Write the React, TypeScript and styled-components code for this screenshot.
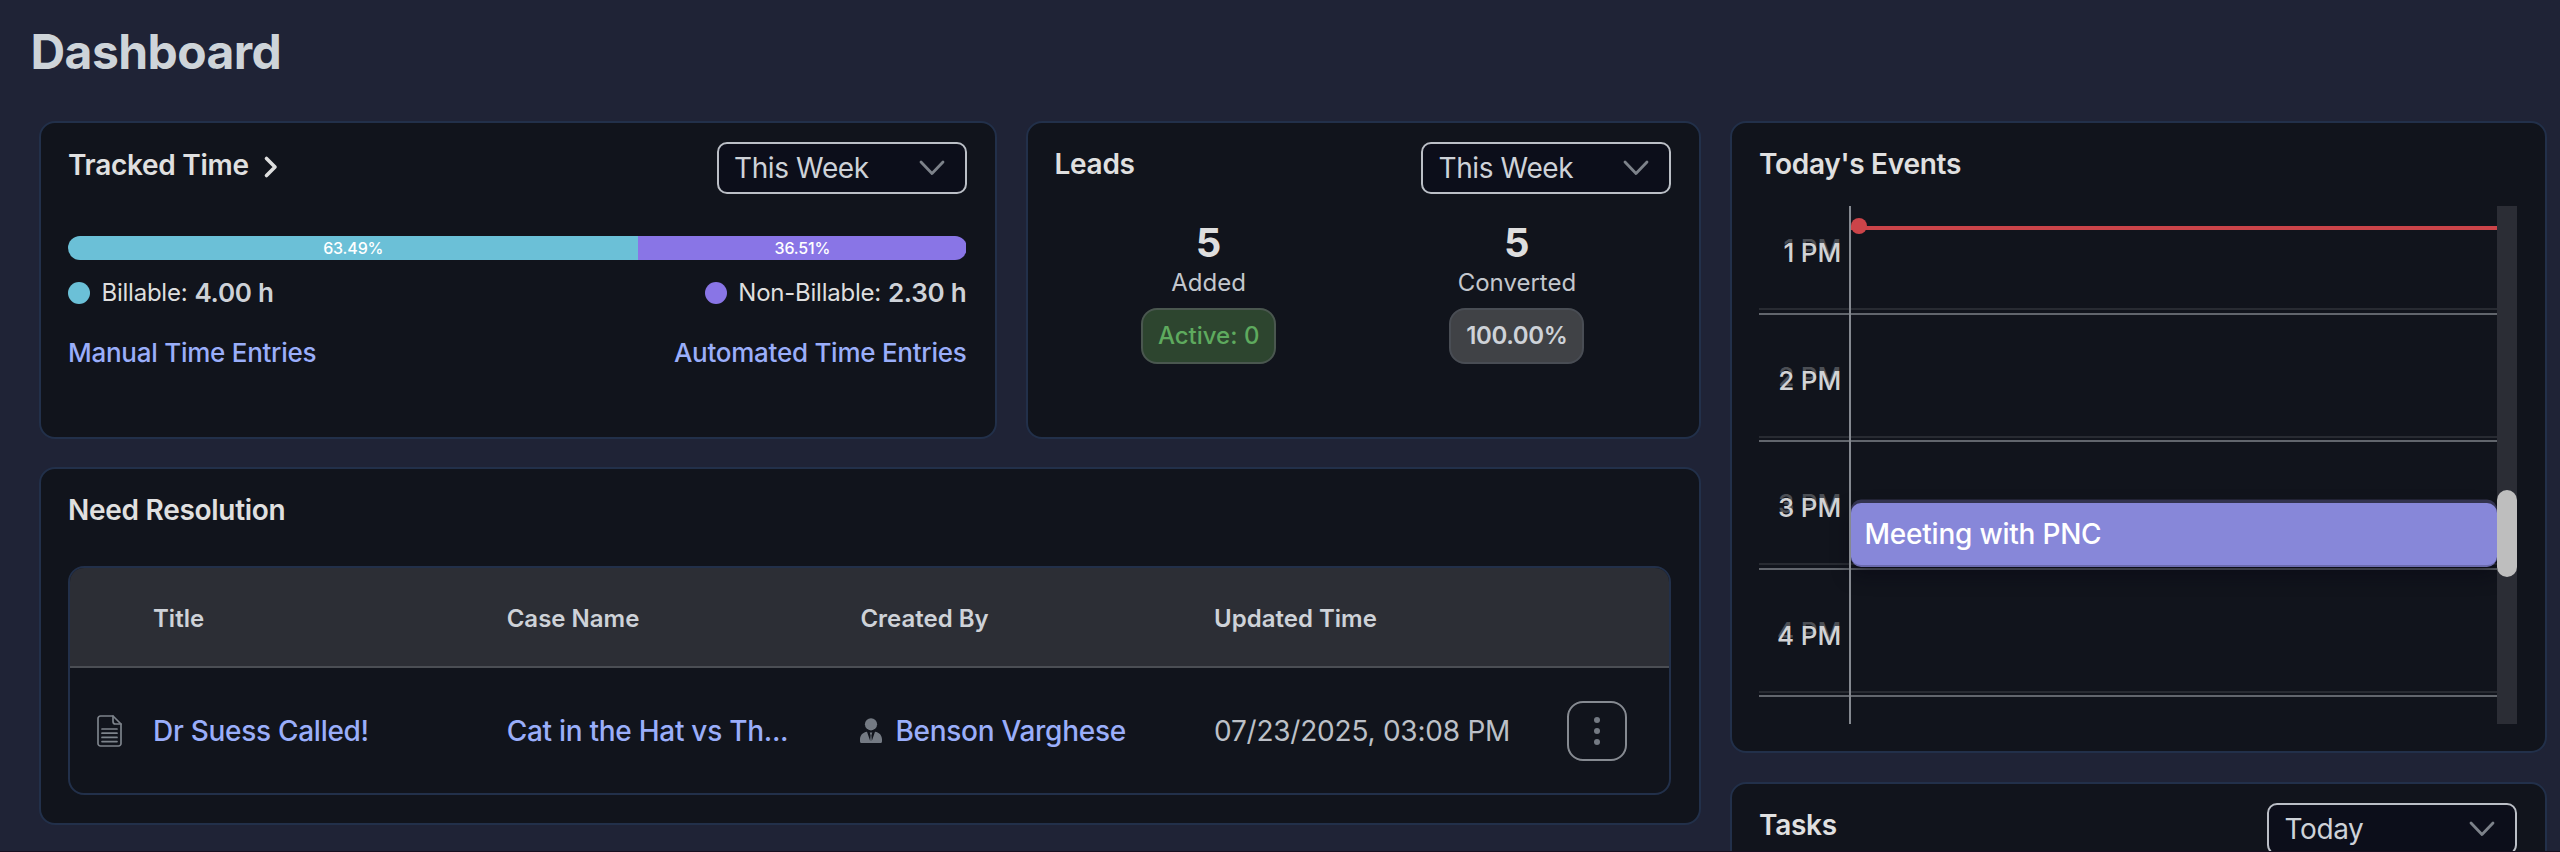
import React from "react";
import styled, { createGlobalStyle } from "styled-components";

const GlobalStyle = createGlobalStyle`
  *, *::before, *::after { box-sizing: border-box; }
  body {
    margin: 0;
    background: #1f2336;
    font-family: Inter, "Liberation Sans", sans-serif;
    color: #dedede;
  }
`;

const Page = styled.div`
  height: 852px;
  overflow: hidden;
  background: #1f2336;
  border-bottom: 1px solid #170f20;
`;

const PageTitle = styled.h1`
  margin: 0;
  padding: 22px 0 0 30.5px;
  height: 121px;
  font-size: 48px;
  font-weight: 700;
  line-height: 60px;
  letter-spacing: -0.012em;
  color: #ced4d9;
`;

const Columns = styled.div`
  display: grid;
  grid-template-columns: 1662px 817px;
  column-gap: 29px;
  padding-left: 39px;
  align-items: start;
`;

const MainColumn = styled.div`
  display: grid;
  grid-template-columns: 957.5px 675.5px;
  grid-template-rows: 318px 358px;
  column-gap: 29px;
  row-gap: 28px;
`;

const SideColumn = styled.div`
  display: grid;
  grid-template-rows: 632px 400px;
  row-gap: 29px;
`;

const Card = styled.section<{ $wide?: boolean }>`
  grid-column: ${({ $wide }) => ($wide ? "1 / -1" : "auto")};
  border: 2px solid #22304a;
  border-radius: 16px;
  background: #11141c;
  padding: 19px 28px 27px 27px;
`;

const CardHeader = styled.header`
  display: flex;
  justify-content: space-between;
  align-items: flex-start;
`;

const CardTitle = styled.h2<{ $line?: number }>`
  margin: 0;
  display: flex;
  align-items: center;
  font-size: 28px;
  font-weight: 600;
  line-height: ${({ $line = 44 }) => $line}px;
  letter-spacing: -0.01em;
  color: #e0e0e0;
`;

const TitleChevron = styled.svg`
  margin: 4px 0 0 14px;
  display: block;
`;

const SelectBox = styled.button`
  display: flex;
  align-items: center;
  justify-content: space-between;
  width: 250px;
  height: 52px;
  padding: 0 20px 0 15.5px;
  border: 2px solid #bbbfc6;
  border-radius: 10px;
  background: #0c0e1a;
  color: #ced2d8;
  font: 400 28px/48px Inter, "Liberation Sans", sans-serif;
  letter-spacing: -0.014em;
`;

const Bar = styled.div`
  display: flex;
  height: 24px;
  margin-top: 42px;
  border-radius: 12px;
  overflow: hidden;
`;

const BarPart = styled.div<{ $color: string }>`
  background: ${({ $color }) => $color};
  color: #fff;
  font-size: 16px;
  font-weight: 500;
  line-height: 25px;
  letter-spacing: -0.01em;
  text-align: center;
`;

const Split = styled.div<{ $top: number }>`
  display: flex;
  justify-content: space-between;
  margin-top: ${({ $top }) => $top}px;
  line-height: 30px;
`;

const Legend = styled.div`
  display: flex;
  align-items: center;
  font-size: 24px;
  letter-spacing: -0.01em;
  color: #dedede;
`;

const Dot = styled.i<{ $color: string }>`
  width: 22px;
  height: 22px;
  margin-right: 11.5px;
  border-radius: 50%;
  background: ${({ $color }) => $color};
`;

const Hours = styled.strong`
  margin-left: 7px;
  font-size: 26px;
  font-weight: 600;
  color: #ced2d8;
`;

const Link = styled.a<{ $size?: number }>`
  font-size: ${({ $size = 28 }) => $size}px;
  font-weight: 500;
  letter-spacing: -0.01em;
  color: #9aaefa;
  white-space: nowrap;
`;

const Stats = styled.div`
  display: grid;
  grid-template-columns: 1fr 1fr;
  margin-top: 25px;
`;

const Stat = styled.div`
  display: flex;
  flex-direction: column;
  align-items: center;
`;

const StatValue = styled.div`
  font-size: 40px;
  font-weight: 700;
  line-height: 48px;
`;

const StatLabel = styled.div`
  font-size: 24px;
  line-height: 32px;
  color: #c3c7cd;
`;

const Badge = styled.div<{ $tone: "green" | "grey" }>`
  width: 135px;
  height: 56px;
  margin-top: 9px;
  border: 2px solid ${({ $tone }) => ($tone === "green" ? "#4a574f" : "#494d54")};
  border-radius: 16px;
  background: ${({ $tone }) => ($tone === "green" ? "#2d452f" : "#404246")};
  color: ${({ $tone }) => ($tone === "green" ? "#5eaa5e" : "#ced2d8")};
  font-size: 24px;
  font-weight: ${({ $tone }) => ($tone === "green" ? 500 : 600)};
  line-height: 51px;
  letter-spacing: ${({ $tone }) => ($tone === "green" ? 0 : "-0.016em")};
  text-align: center;
`;

const Table = styled.div`
  margin-top: 34px;
  border: 2px solid #22304a;
  border-radius: 16px;
  overflow: hidden;
`;

const TableRow = styled.div<{ $head?: boolean }>`
  display: grid;
  grid-template-columns: 83px 353.7px 353.7px 353.7px 353.4px 1fr;
  align-items: center;
  height: ${({ $head }) => ($head ? 100 : 125)}px;
  background: ${({ $head }) => ($head ? "#2c2e35" : "transparent")};
  border-bottom: ${({ $head }) => ($head ? "2px solid #4b4e54" : "0")};
  font-size: ${({ $head }) => ($head ? 24 : 28)}px;
  font-weight: ${({ $head }) => ($head ? 600 : 400)};
  letter-spacing: ${({ $head }) => ($head ? 0 : "-0.008em")};
  padding-top: ${({ $head }) => ($head ? 3 : 0)}px;
  color: ${({ $head }) => ($head ? "#ced2d8" : "#bcc0c7")};
`;

const Cell = styled.div`
  display: flex;
  align-items: center;
  white-space: nowrap;
`;

const IconCell = styled(Cell)`
  padding-left: 27px;
`;

const PersonIcon = styled.svg`
  display: block;
  margin: 0 13px 0 0;
`;

const MoreButton = styled.button`
  display: grid;
  place-items: center;
  width: 60px;
  height: 60px;
  padding: 0;
  border: 2px solid #868a91;
  border-radius: 16px;
  background: transparent;
`;

const Calendar = styled.div`
  display: flex;
  height: 518px;
  margin-top: 20px;
`;

const Schedule = styled.div`
  position: relative;
  width: 738px;
  overflow: hidden;
`;

const HourList = styled.div`
  margin-top: -19px;
`;

const HourRow = styled.div`
  position: relative;
  display: grid;
  grid-template-columns: 92px 1fr;
  height: 127.5px;
  border-bottom: 2px solid #62666d;

  &::after {
    content: "";
    position: absolute;
    left: 0;
    right: 0;
    bottom: 2.5px;
    height: 2px;
    background: #282b32;
  }
`;

const HourLabel = styled.div`
  border-right: 2px solid #858990;
  margin-bottom: -2px;
  padding-right: 8px;
  z-index: 1;
  font-size: 26px;
  font-weight: 500;
  line-height: 132px;
  letter-spacing: -0.005em;
  text-align: right;
  color: #d2d3d5;
  text-shadow: 0 -4px 0 #4c4f55;
`;

const EventBlock = styled.div`
  position: absolute;
  left: 92px;
  right: 0;
  top: 297px;
  height: 64px;
  padding-left: 13.5px;
  border-radius: 10px;
  background: #8787d9;
  box-shadow: 0 -3.5px 0 #33334f, 0 8px 18px rgba(8, 9, 20, 0.6);
  border-bottom: 2px solid #6b6bad;
  color: #fff;
  font-size: 28px;
  font-weight: 500;
  line-height: 63px;
  letter-spacing: -0.008em;
`;

const NowLine = styled.div`
  position: absolute;
  left: 92px;
  right: 0;
  top: 20px;
  height: 4px;
  background: #cc4449;

  &::before {
    content: "";
    position: absolute;
    left: -0.5px;
    top: -8px;
    width: 16px;
    height: 16px;
    border-radius: 50%;
    background: #cc4449;
  }
`;

const ScrollTrack = styled.div`
  width: 20px;
  padding-top: 284px;
  background: #2b2d35;
`;

const ScrollThumb = styled.div`
  height: 87px;
  border-radius: 10px;
  background: #bebebe;
`;

const Select = ({ label }: { label: string }) => (
  <SelectBox>
    {label}
    <svg width="26" height="16" viewBox="0 0 26 16" fill="none">
      <path d="M2 2 L13 13.5 L24 2" stroke="#7d828a" strokeWidth="2.8" strokeLinecap="round" strokeLinejoin="round" />
    </svg>
  </SelectBox>
);

const TEAL = "#6bc0d7";
const PURPLE = "#8975e6";

const shares = [
  { percent: 63.49, color: TEAL },
  { percent: 36.51, color: PURPLE },
];

// The last row is scrolled almost out of view, so it carries no label.
const hours = ["1 PM", "2 PM", "3 PM", "4 PM", ""];

export default function App() {
  return (
    <Page>
      <GlobalStyle />
      <PageTitle>Dashboard</PageTitle>
      <Columns>
        <MainColumn>
          <Card>
            <CardHeader>
              <CardTitle $line={46}>
                Tracked Time
                <TitleChevron width="20" height="24" viewBox="0 0 20 24" fill="none">
                  <path d="M3.5 3.5 L12 12 L3.5 20.5" stroke="#dedede" strokeWidth="3.6" strokeLinecap="round" strokeLinejoin="round" />
                </TitleChevron>
              </CardTitle>
              <Select label="This Week" />
            </CardHeader>
            <Bar>
              {shares.map(({ percent, color }) => (
                <BarPart key={color} $color={color} style={{ width: `${percent}%` }}>
                  {percent}%
                </BarPart>
              ))}
            </Bar>
            <Split $top={18}>
              <Legend>
                <Dot $color={TEAL} />
                Billable: <Hours>4.00 h</Hours>
              </Legend>
              <Legend>
                <Dot $color={PURPLE} />
                Non-Billable: <Hours>2.30 h</Hours>
              </Legend>
            </Split>
            <Split $top={30}>
              <Link $size={26}>Manual Time Entries</Link>
              <Link $size={26}>Automated Time Entries</Link>
            </Split>
          </Card>

          <Card>
            <CardHeader>
              <CardTitle>Leads</CardTitle>
              <Select label="This Week" />
            </CardHeader>
            <Stats>
              <Stat>
                <StatValue>5</StatValue>
                <StatLabel>Added</StatLabel>
                <Badge $tone="green">Active: 0</Badge>
              </Stat>
              <Stat>
                <StatValue>5</StatValue>
                <StatLabel>Converted</StatLabel>
                <Badge $tone="grey">100.00%</Badge>
              </Stat>
            </Stats>
          </Card>

          <Card $wide>
            <CardTitle>Need Resolution</CardTitle>
            <Table>
              <TableRow $head>
                <Cell />
                <Cell>Title</Cell>
                <Cell>Case Name</Cell>
                <Cell>Created By</Cell>
                <Cell>Updated Time</Cell>
                <Cell />
              </TableRow>
              <TableRow>
                <IconCell>
                  <svg width="25" height="32" viewBox="0 0 25 32" fill="none" stroke="#7d838b" strokeWidth="1.7" strokeLinejoin="round" strokeLinecap="round">
                    <path d="M3.5 1 H16 L24 9 V28.5 A2.5 2.5 0 0 1 21.5 31 H3.5 A2.5 2.5 0 0 1 1 28.5 V3.5 A2.5 2.5 0 0 1 3.5 1 Z" />
                    <path d="M16 1 V6.5 A2.5 2.5 0 0 0 18.5 9 H24" />
                    <path d="M5 14 H20 M5 18.2 H20 M5 22.4 H20 M5 26.6 H20" />
                  </svg>
                </IconCell>
                <Cell><Link>Dr Suess Called!</Link></Cell>
                <Cell><Link>Cat in the Hat vs Th...</Link></Cell>
                <Cell>
                  <PersonIcon width="22" height="25" viewBox="0 0 22 25" fill="#747a83">
                    <circle cx="11" cy="6.3" r="6.1" />
                    <path d="M7 13.8 L10.2 23 L10.6 17.2 L9.7 14.6 H12.3 L11.4 17.2 L11.8 23 L15 13.8 C19.5 14.4 22 17.5 22 21.5 V23.5 Q22 25 20.5 25 H1.5 Q0 25 0 23.5 V21.5 C0 17.5 2.5 14.4 7 13.8 Z" />
                  </PersonIcon>
                  <Link>Benson Varghese</Link>
                </Cell>
                <Cell>07/23/2025, 03:08 PM</Cell>
                <Cell>
                  <MoreButton aria-label="More">
                    <svg width="8" height="30" viewBox="0 0 8 30" fill="#747a83">
                      <circle cx="4" cy="4" r="3" />
                      <circle cx="4" cy="15" r="3" />
                      <circle cx="4" cy="26" r="3" />
                    </svg>
                  </MoreButton>
                </Cell>
              </TableRow>
            </Table>
          </Card>
        </MainColumn>

        <SideColumn>
          <Card>
            <CardTitle>Today's Events</CardTitle>
            <Calendar>
              <Schedule>
                <HourList>
                  {hours.map((hour) => (
                    <HourRow key={hour}>
                      <HourLabel>{hour}</HourLabel>
                    </HourRow>
                  ))}
                </HourList>
                <EventBlock>Meeting with PNC</EventBlock>
                <NowLine />
              </Schedule>
              <ScrollTrack>
                <ScrollThumb />
              </ScrollTrack>
            </Calendar>
          </Card>

          <Card>
            <CardHeader>
              <CardTitle>Tasks</CardTitle>
              <Select label="Today" />
            </CardHeader>
          </Card>
        </SideColumn>
      </Columns>
    </Page>
  );
}
